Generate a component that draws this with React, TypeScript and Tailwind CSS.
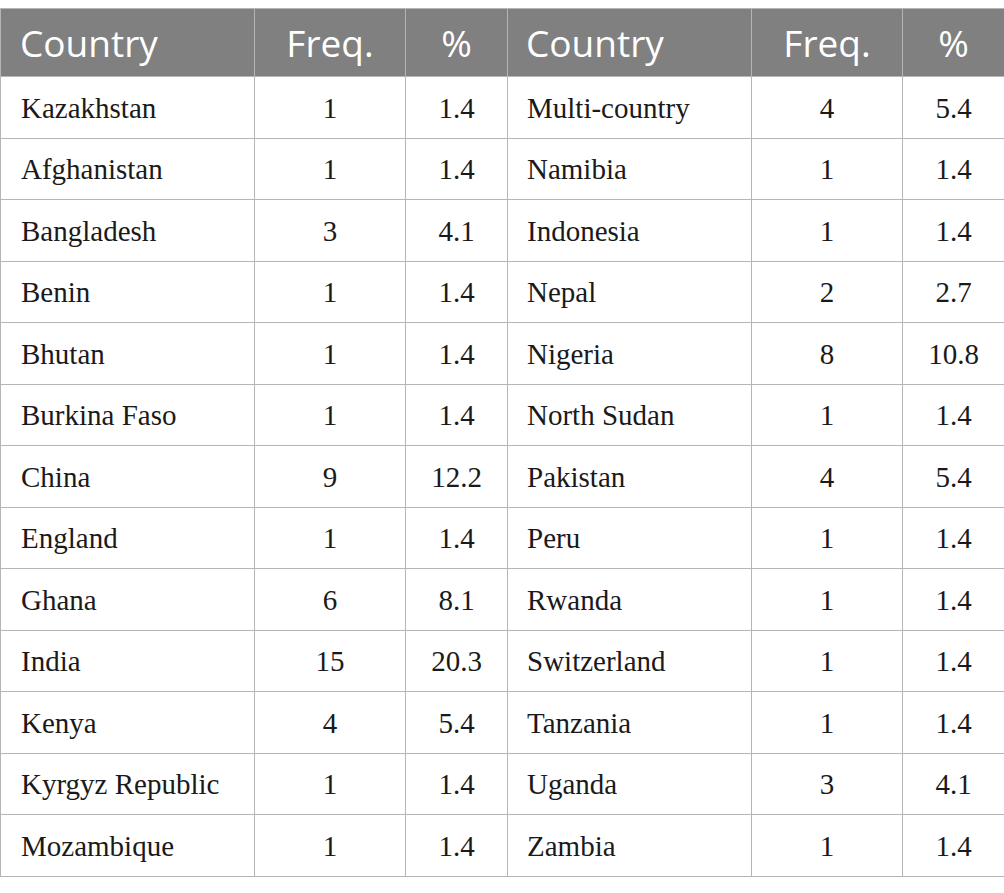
const rows: [string, string, string, string, string, string][] = [
  ['Kazakhstan', '1', '1.4', 'Multi-country', '4', '5.4'],
  ['Afghanistan', '1', '1.4', 'Namibia', '1', '1.4'],
  ['Bangladesh', '3', '4.1', 'Indonesia', '1', '1.4'],
  ['Benin', '1', '1.4', 'Nepal', '2', '2.7'],
  ['Bhutan', '1', '1.4', 'Nigeria', '8', '10.8'],
  ['Burkina Faso', '1', '1.4', 'North Sudan', '1', '1.4'],
  ['China', '9', '12.2', 'Pakistan', '4', '5.4'],
  ['England', '1', '1.4', 'Peru', '1', '1.4'],
  ['Ghana', '6', '8.1', 'Rwanda', '1', '1.4'],
  ['India', '15', '20.3', 'Switzerland', '1', '1.4'],
  ['Kenya', '4', '5.4', 'Tanzania', '1', '1.4'],
  ['Kyrgyz Republic', '1', '1.4', 'Uganda', '3', '4.1'],
  ['Mozambique', '1', '1.4', 'Zambia', '1', '1.4'],
]

const widths = ['w-[254px]', 'w-[151px]', 'w-[102px]', 'w-[244px]', 'w-[151px]', 'w-[102px]']

export default function App() {
  return (
    <div className="w-[1004px] bg-white pt-[8px]">
      <table className="w-[1004px] table-fixed border-collapse border border-[#b5b5b5]">
        <colgroup>
          {widths.map((w, i) => (
            <col key={i} className={w} />
          ))}
        </colgroup>
        <thead>
          <tr className="h-[68px] bg-[#808080] text-white font-['Open_Sans',sans-serif] text-[37px]">
            <th className="border border-[#b5b5b5] pl-[19px] text-left font-normal">Country</th>
            <th className="border border-[#b5b5b5] text-center font-normal">Freq.</th>
            <th className="border border-[#b5b5b5] text-center font-normal">%</th>
            <th className="border border-[#b5b5b5] pl-[18px] text-left font-normal">Country</th>
            <th className="border border-[#b5b5b5] text-center font-normal">Freq.</th>
            <th className="border border-[#b5b5b5] text-center font-normal">%</th>
          </tr>
        </thead>
        <tbody className="font-['Liberation_Serif',serif] text-[29px] text-[#1a1a1a]">
          {rows.map((r, i) => (
            <tr key={i} className="h-[61.5px]">
              <td className="border border-[#b5b5b5] pl-[20px] pt-[2px]">{r[0]}</td>
              <td className="border border-[#b5b5b5] text-center pt-[2px]">{r[1]}</td>
              <td className="border border-[#b5b5b5] text-center pt-[2px]">{r[2]}</td>
              <td className="border border-[#b5b5b5] pl-[19px] pt-[2px]">{r[3]}</td>
              <td className="border border-[#b5b5b5] text-center pt-[2px]">{r[4]}</td>
              <td className="border border-[#b5b5b5] text-center pt-[2px]">{r[5]}</td>
            </tr>
          ))}
        </tbody>
      </table>
    </div>
  )
}
